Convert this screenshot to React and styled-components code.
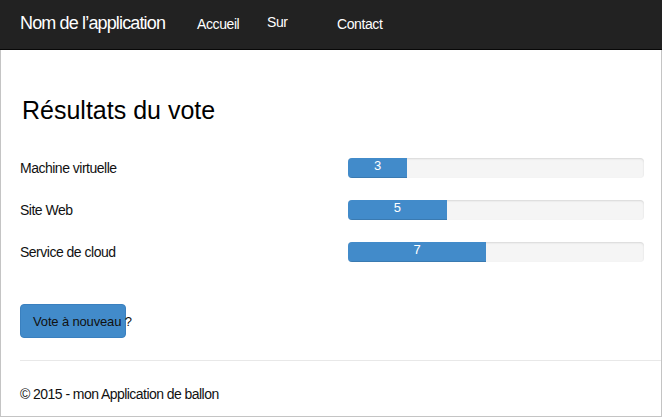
import React from "react";
import styled, { createGlobalStyle } from "styled-components";

const GlobalStyle = createGlobalStyle`
  html, body { margin: 0; padding: 0; background: #fff; }
  body {
    font-family: "Liberation Sans", Arial, sans-serif;
    font-size: 14px;
    color: #1e1e1e;
  }
  * { box-sizing: border-box; }
`;

const NavBar = styled.nav`
  height: 50px;
  background: #222;
  border-bottom: 1px solid #080808;
  display: flex;
  align-items: center;
  padding-left: 20px;
`;

const Brand = styled.a`
  width: 177px;
  font-size: 18px;
  letter-spacing: -0.85px;
  color: #fff;
  text-decoration: none;
  margin-top: -2px;
`;

const NavLink = styled.a`
  width: 70px;
  font-size: 14px;
  letter-spacing: -0.4px;
  color: #fff;
  text-decoration: none;
  margin-top: ${(p) => (p.$raise ? "-5px" : "-1px")};
`;

const Frame = styled.div`
  height: 367px;
  border-left: 1px solid #c4c4c4;
  border-right: 1px solid #c4c4c4;
  border-bottom: 1px solid #c4c4c4;
  padding-left: 19px;
  display: flex;
  flex-direction: column;
`;

const Title = styled.h2`
  margin: 47px 0 23px 2px;
  font-size: 25px;
  line-height: 27px;
  font-weight: 400;
  color: #000;
`;

const Results = styled.div`
  display: grid;
  grid-template-columns: 328px 296px;
  grid-auto-rows: 42px;
  align-items: center;
`;

const Label = styled.div`
  font-size: 14px;
  letter-spacing: -0.5px;
  color: #111;
`;

const Track = styled.div`
  height: 20px;
  background: #f5f5f5;
  border-radius: 4px;
  box-shadow: inset 0 1px 2px rgba(0, 0, 0, 0.12);
  overflow: hidden;
  display: flex;
`;

const Fill = styled.div`
  height: 100%;
  background: #428bca;
  box-shadow: inset 0 -1px 0 rgba(0, 0, 0, 0.12);
  color: #fff;
  font-size: 13px;
  line-height: 15px;
  text-align: center;
`;

const VoteButton = styled.button`
  margin-top: 31px;
  width: 106px;
  height: 34px;
  padding: 0 0 0 12px;
  background: #428bca;
  border: 1px solid #3a80bf;
  border-radius: 4px;
  font-family: "Liberation Sans", Arial, sans-serif;
  font-size: 13px;
  letter-spacing: -0.15px;
  color: #111;
  text-align: left;
  white-space: nowrap;
  overflow: visible;
  cursor: pointer;
`;

const Rule = styled.hr`
  margin: 22px 0 0;
  border: 0;
  border-top: 1px solid #e8e8e8;
`;

const Footer = styled.footer`
  margin-top: 23px;
  font-size: 14px;
  line-height: 20px;
  letter-spacing: -0.55px;
  color: #111;
`;

const results = [
  { label: "Machine virtuelle", count: 3 },
  { label: "Site Web", count: 5 },
  { label: "Service de cloud", count: 7 },
];

const total = results.reduce((s, r) => s + r.count, 0);

export default function App() {
  return (
    <>
      <GlobalStyle />
      <NavBar>
        <Brand href="#">Nom de l’application</Brand>
        <NavLink href="#">Accueil</NavLink>
        <NavLink href="#" $raise>
          Sur
        </NavLink>
        <NavLink href="#">Contact</NavLink>
      </NavBar>
      <Frame>
        <Title>Résultats du vote</Title>
        <Results>
          {results.map((r) => (
            <React.Fragment key={r.label}>
              <Label>{r.label}</Label>
              <Track>
                <Fill style={{ width: `${(r.count / total) * 100}%` }}>
                  {r.count}
                </Fill>
              </Track>
            </React.Fragment>
          ))}
        </Results>
        <div>
          <VoteButton>Vote à nouveau ?</VoteButton>
        </div>
        <Rule />
        <Footer>© 2015 - mon Application de ballon</Footer>
      </Frame>
    </>
  );
}
